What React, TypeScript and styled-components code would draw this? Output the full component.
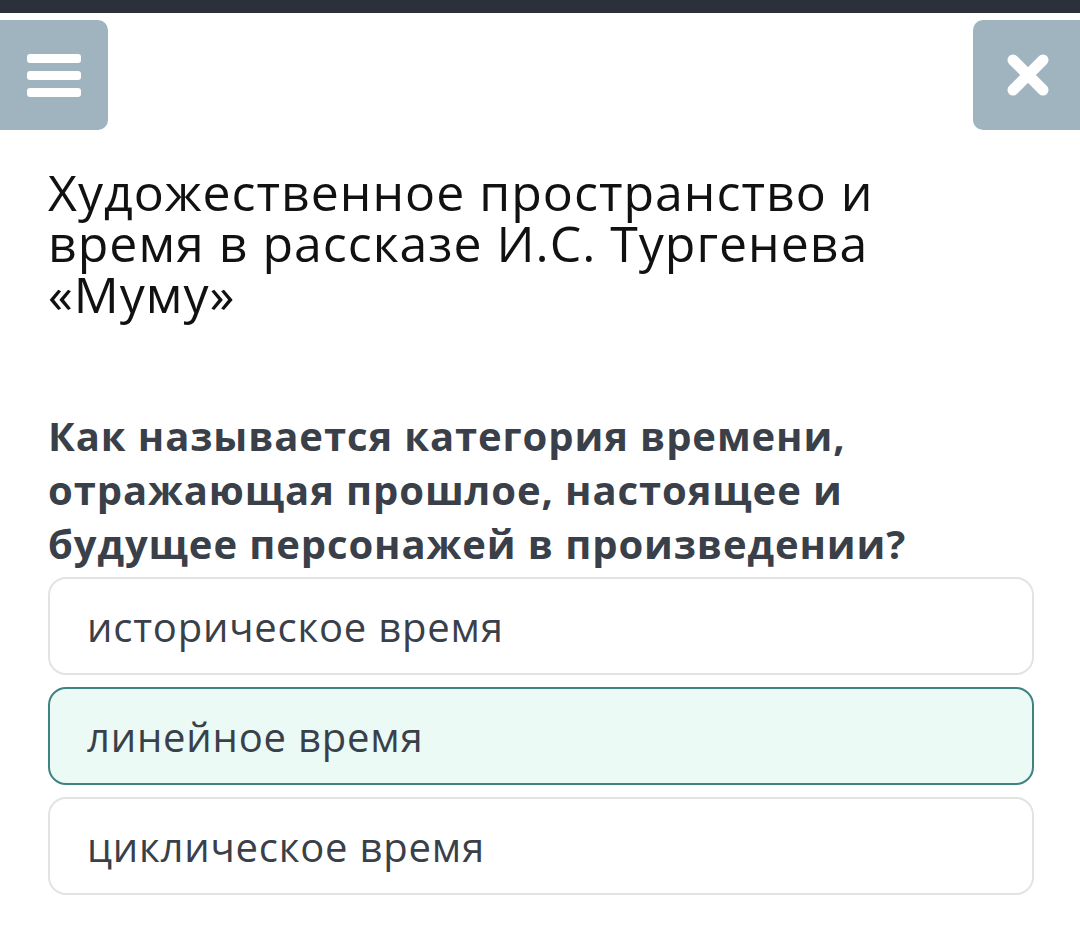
import styled, { createGlobalStyle } from "styled-components";
import React, { useState } from "react";

const GlobalStyle = createGlobalStyle`
  html, body {
    margin: 0;
    padding: 0;
    background: #ffffff;
  }
  body {
    font-family: "Open Sans", "Noto Sans", sans-serif;
    overflow: hidden;
  }
`;

const answers = ["историческое время", "линейное время", "циклическое время"];

export default function App() {
  const [selected, setSelected] = useState(1);

  return (
    <>
      <GlobalStyle />
      <Page>
        <TopBar />
        <Header>
          <MenuBtn aria-label="menu">
            <BurgerLine />
            <BurgerLine />
            <BurgerLine />
          </MenuBtn>
          <CloseBtn aria-label="close">
            <svg width="44" height="44" viewBox="0 0 44 44">
              <path
                d="M7 7 L37 37 M37 7 L7 37"
                stroke="#ffffff"
                strokeWidth="11"
                strokeLinecap="round"
              />
            </svg>
          </CloseBtn>
        </Header>
        <Content>
          <Title>
            Художественное пространство и
            <br />
            время в рассказе И.С. Тургенева
            <br />
            «Муму»
          </Title>
          <Question>
            Как называется категория времени,
            <br />
            отражающая прошлое, настоящее и
            <br />
            будущее персонажей в произведении?
          </Question>
          <Answers>
            {answers.map((a, i) => (
              <Answer key={a} $active={i === selected} onClick={() => setSelected(i)}>
                {a}
              </Answer>
            ))}
          </Answers>
        </Content>
      </Page>
    </>
  );
}

const Page = styled.div`
  width: 1080px;
  height: 947px;
  background: #ffffff;
`;

const TopBar = styled.div`
  height: 13px;
  background: #2b303a;
`;

const Header = styled.header`
  display: flex;
  justify-content: space-between;
  margin-top: 7px;
  height: 110px;
`;

const MenuBtn = styled.div`
  width: 108px;
  height: 110px;
  background: #a0b4c0;
  border-radius: 0 10px 10px 0;
  display: flex;
  flex-direction: column;
  justify-content: center;
  gap: 8px;
  padding-left: 27px;
  box-sizing: border-box;
`;

const BurgerLine = styled.span`
  width: 54px;
  height: 9px;
  background: #ffffff;
  border-radius: 3px;
`;

const CloseBtn = styled.div`
  width: 107px;
  height: 110px;
  background: #a0b4c0;
  border-radius: 10px 0 0 10px;
  display: flex;
  align-items: center;
  padding-left: 33px;
  box-sizing: border-box;
`;

const Content = styled.main`
  padding: 0 46px 0 48px;
`;

const Title = styled.h1`
  margin: 37px 0 0;
  font-size: 50px;
  line-height: 51px;
  font-weight: 400;
  letter-spacing: 1px;
  color: #111111;
`;

const Question = styled.h2`
  margin: 89px 0 0;
  font-size: 40px;
  line-height: 54px;
  font-weight: 700;
  color: #3a4049;
  letter-spacing: 0.9px;
`;

const Answers = styled.div`
  display: flex;
  flex-direction: column;
  gap: 12px;
  margin-top: 6px;
`;

const Answer = styled.div<{ $active: boolean }>`
  height: 98px;
  box-sizing: border-box;
  display: flex;
  align-items: center;
  padding-left: 37px;
  border-radius: 18px;
  border: 2px solid ${({ $active }) => ($active ? "#3f8282" : "#e3e3e3")};
  background: ${({ $active }) => ($active ? "#ebfaf4" : "#ffffff")};
  font-size: 40px;
  letter-spacing: 0.8px;
  color: #3a4049;
  cursor: pointer;
`;
